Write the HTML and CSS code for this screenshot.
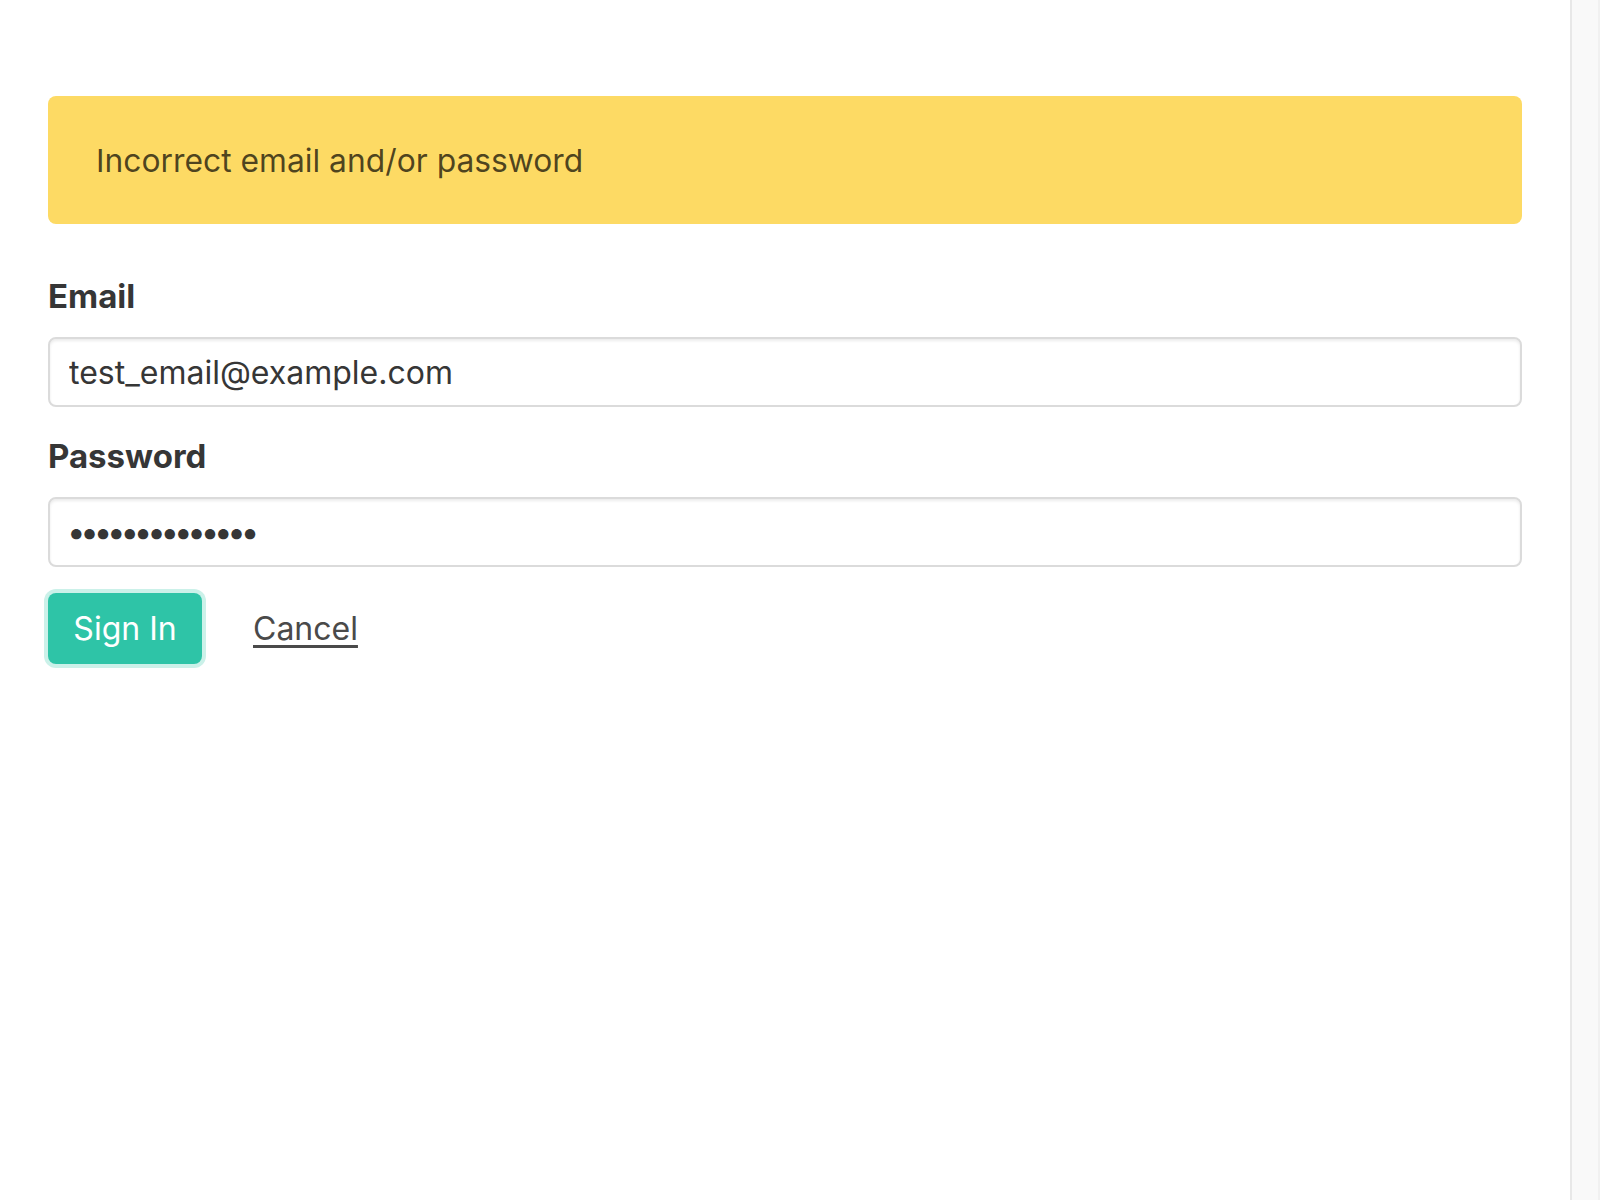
FILE: index.html
```html
<!DOCTYPE html>
<html lang="en">
<head>
<meta charset="utf-8">
<title>Sign In</title>
<link rel="stylesheet" href="styles.css">
</head>
<body>
<div class="page">
  <main class="content">
    <div class="notification">Incorrect email and/or password</div>
    <form class="form">
      <div class="field">
        <label class="label" for="email">Email</label>
        <input class="input" id="email" type="email" value="test_email@example.com">
      </div>
      <div class="field">
        <label class="label" for="password">Password</label>
        <input class="input input-password" id="password" type="password" value="abcdefghijklmn">
      </div>
      <div class="actions">
        <button class="button" type="button">Sign In</button>
        <a class="cancel" href="#">Cancel</a>
      </div>
    </form>
  </main>
  <div class="gutter"></div>
</div>
</body>
</html>
```

FILE: styles.css
```css
html, body {
  margin: 0;
  padding: 0;
  background: #ffffff;
}

body {
  font-family: Inter, "Open Sans", "Liberation Sans", sans-serif;
  font-size: 32px;
  color: #363636;
}

.page {
  display: flex;
  height: 1200px;
}

.content {
  flex: 1;
  padding: 96px 48px 0 48px;
}

.gutter {
  width: 26px;
  flex: 0 0 26px;
  background: #f9f9f9;
  border-left: 2px solid #e8e8e8;
  border-right: 2px solid #f1f1f1;
}

.notification {
  background: #fdda64;
  color: rgba(0, 0, 0, 0.7);
  border-radius: 8px;
  height: 128px;
  box-sizing: border-box;
  padding: 0 48px;
  display: flex;
  align-items: center;
  font-size: 31.8px;
  margin-bottom: 48px;
}

.field {
  display: flex;
  flex-direction: column;
  margin-bottom: 25px;
}

.label {
  font-weight: 700;
  font-size: 33px;
  line-height: 48px;
  margin-bottom: 17px;
  color: #363636;
}

.input {
  height: 70px;
  box-sizing: border-box;
  border: 2px solid #dbdbdb;
  border-radius: 8px;
  box-shadow: inset 0 2px 3px rgba(10, 10, 10, 0.08);
  padding: 0 19px;
  font-family: inherit;
  font-size: 32px;
  color: #363636;
  background: #ffffff;
  outline: none;
}

.input-password {
  font-size: 33px;
  letter-spacing: -5.2px;
  padding-left: 17px;
}

.actions {
  display: flex;
  align-items: center;
  gap: 51px;
  padding-top: 1px;
}

.button {
  height: 71px;
  width: 154px;
  box-sizing: border-box;
  border: 2px solid transparent;
  border-radius: 8px;
  background: #2ec4a7;
  color: #ffffff;
  font-family: inherit;
  font-size: 32px;
  padding: 0;
  box-shadow: 0 0 0 4px #cbf1e9;
  cursor: pointer;
}

.cancel {
  color: #4a4a4a;
  font-size: 32px;
  text-decoration: underline;
  text-underline-offset: 5px;
}
```
